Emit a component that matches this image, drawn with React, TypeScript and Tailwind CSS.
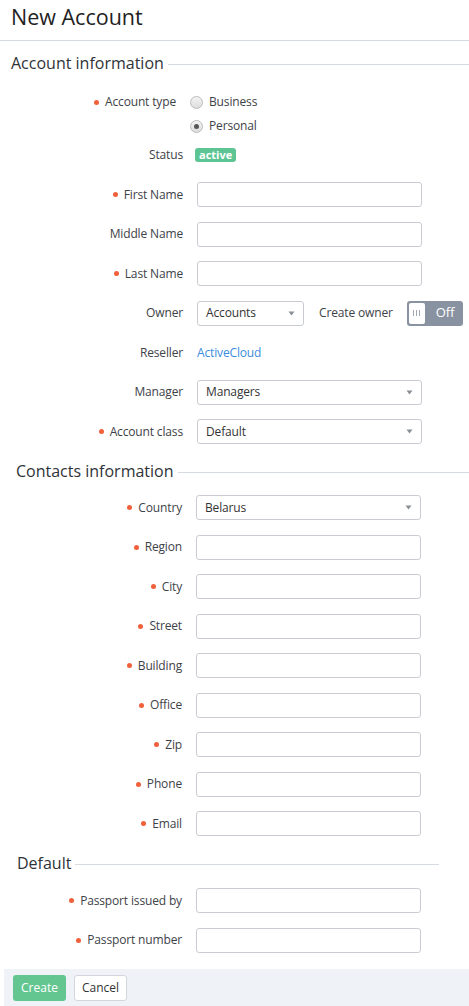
import React from 'react';

const font = { fontFamily: '"Open Sans", "Liberation Sans", sans-serif' };

function Dot() {
  return <span className="inline-block w-[5px] h-[5px] rounded-full bg-[#f0603a] mr-[6px]" />;
}

function Label({ text, required, width }: { text: string; required?: boolean; width: string }) {
  return (
    <div className={`${width} shrink-0 flex items-center justify-end pr-[14px] text-[12px] tracking-[-0.15px] text-[#3d4248]`}>
      {required && <Dot />}
      <span>{text}</span>
    </div>
  );
}

function Caret() {
  return (
    <svg width="7" height="5" viewBox="0 0 7 5" className="shrink-0">
      <path d="M0.5 0.5h6L3.5 4.5z" fill="#8a8f96" />
    </svg>
  );
}

function TextInput({ w = 'w-[225px]' }: { w?: string }) {
  return <div className={`${w} h-[25px] border border-[#c9cdd3] rounded-[3px] bg-white`} />;
}

function Select({ value, w = 'w-[225px]' }: { value: string; w?: string }) {
  return (
    <div className={`${w} h-[25px] border border-[#c9cdd3] rounded-[3px] bg-white flex items-center justify-between pl-[8px] pr-[8px] text-[12px] tracking-[-0.15px] text-[#333]`}>
      <span>{value}</span>
      <Caret />
    </div>
  );
}

function Heading({ text, ml, lineEnd }: { text: string; ml: string; lineEnd?: string }) {
  return (
    <div className={`flex items-center h-[22px] ${ml} ${lineEnd ?? ''}`}>
      <span className="text-[16px] text-[#2f3338] leading-none">{text}</span>
      <div className="flex-1 h-px bg-[#d6dbe2] ml-[4px] mt-[2px]" />
    </div>
  );
}

function Radio({ checked, label }: { checked?: boolean; label: string }) {
  return (
    <div className="flex items-center h-[24px] -ml-[7px]">
      <span className="w-[13px] h-[13px] rounded-full border border-[#b9bcc0] bg-gradient-to-b from-[#f4f4f4] to-[#dcdcdc] flex items-center justify-center">
        {checked && <span className="w-[5px] h-[5px] rounded-full bg-[#555]" />}
      </span>
      <span className="ml-[6px] text-[12px] tracking-[-0.15px] text-[#3d4248]">{label}</span>
    </div>
  );
}

const accountW = 'w-[197px]';
const contactW = 'w-[196px]';

export default function App() {
  const contacts = ['Country', 'Region', 'City', 'Street', 'Building', 'Office', 'Zip', 'Phone', 'Email'];

  return (
    <div className="w-[469px] bg-white" style={font}>
      {/* Page title */}
      <div className="h-[41px] border-b border-[#d6dbe2] flex items-center pl-[11px] pb-[5px]">
        <h1 className="text-[21.5px] text-[#222] font-normal">New Account</h1>
      </div>

      {/* Account information */}
      <div className="mt-[11px]">
        <Heading text="Account information" ml="ml-[11px]" />
      </div>

      <div className="mt-[16px] flex">
        <div className={`${accountW} shrink-0 flex justify-end items-center pr-[21px] h-[24px] text-[12px] tracking-[-0.15px] text-[#3d4248]`}>
          <Dot />
          <span>Account type</span>
        </div>
        <div className="flex flex-col">
          <Radio label="Business" />
          <Radio label="Personal" checked />
        </div>
      </div>

      <div className="mt-[5px] flex h-[24px] items-center">
        <Label text="Status" width={accountW} />
        <span className="-ml-[2px] h-[14px] px-[4px] rounded-[3px] bg-[#5dc494] text-white text-[11px] font-bold leading-[14px]">active</span>
      </div>

      <div className="mt-[15px] flex flex-col gap-[14.5px]">
        <div className="flex h-[25px]">
          <Label text="First Name" required width={accountW} />
          <TextInput />
        </div>
        <div className="flex h-[25px]">
          <Label text="Middle Name" width={accountW} />
          <TextInput />
        </div>
        <div className="flex h-[25px]">
          <Label text="Last Name" required width={accountW} />
          <TextInput />
        </div>
        <div className="flex h-[25px] items-center">
          <Label text="Owner" width={accountW} />
          <Select value="Accounts" w="w-[107px]" />
          <span className="ml-[15px] text-[12px] tracking-[-0.15px] text-[#3d4248]">Create owner</span>
          <div className="ml-[14px] w-[56px] h-[25px] rounded-[3px] bg-[#8992a1] flex items-center p-[2px]">
            {/* knob with grip lines */}
            <div className="w-[16px] h-full rounded-[2px] bg-white flex items-center justify-center gap-[2px]">
              <span className="w-px h-[6px] bg-[#a3a9b2]" />
              <span className="w-px h-[6px] bg-[#a3a9b2]" />
              <span className="w-px h-[6px] bg-[#a3a9b2]" />
            </div>
            <span className="ml-[11px] text-[13px] text-white">Off</span>
          </div>
        </div>
        <div className="flex h-[25px] items-center">
          <Label text="Reseller" width={accountW} />
          <span className="text-[12px] tracking-[-0.15px] text-[#3a8dde]">ActiveCloud</span>
        </div>
        <div className="flex h-[25px]">
          <Label text="Manager" width={accountW} />
          <Select value="Managers" />
        </div>
        <div className="flex h-[25px]">
          <Label text="Account class" required width={accountW} />
          <Select value="Default" />
        </div>
      </div>

      {/* Contacts information */}
      <div className="mt-[16px]">
        <Heading text="Contacts information" ml="ml-[16px]" />
      </div>

      <div className="mt-[13px] flex flex-col gap-[14.5px]">
        {contacts.map((c) => (
          <div key={c} className="flex h-[25px]">
            <Label text={c} required width={contactW} />
            {c === 'Country' ? <Select value="Belarus" /> : <TextInput />}
          </div>
        ))}
      </div>

      {/* Default */}
      <div className="mt-[16px]">
        <Heading text="Default" ml="ml-[17px]" lineEnd="mr-[30px]" />
      </div>

      <div className="mt-[14px] flex flex-col gap-[14.5px]">
        <div className="flex h-[25px]">
          <Label text="Passport issued by" required width={contactW} />
          <TextInput />
        </div>
        <div className="flex h-[25px]">
          <Label text="Passport number" required width={contactW} />
          <TextInput />
        </div>
      </div>

      {/* Footer */}
      <div className="mt-[16.5px] ml-[4px] h-[37px] bg-[#eff2f6] flex items-center pl-[9px] gap-[8px]">
        <button className="w-[53px] h-[26px] rounded-[3px] bg-[#63c691] text-white text-[12px]">Create</button>
        <button className="w-[53px] h-[26px] rounded-[3px] bg-white border border-[#d3d7dc] text-[#333] text-[12px]">Cancel</button>
      </div>
    </div>
  );
}
